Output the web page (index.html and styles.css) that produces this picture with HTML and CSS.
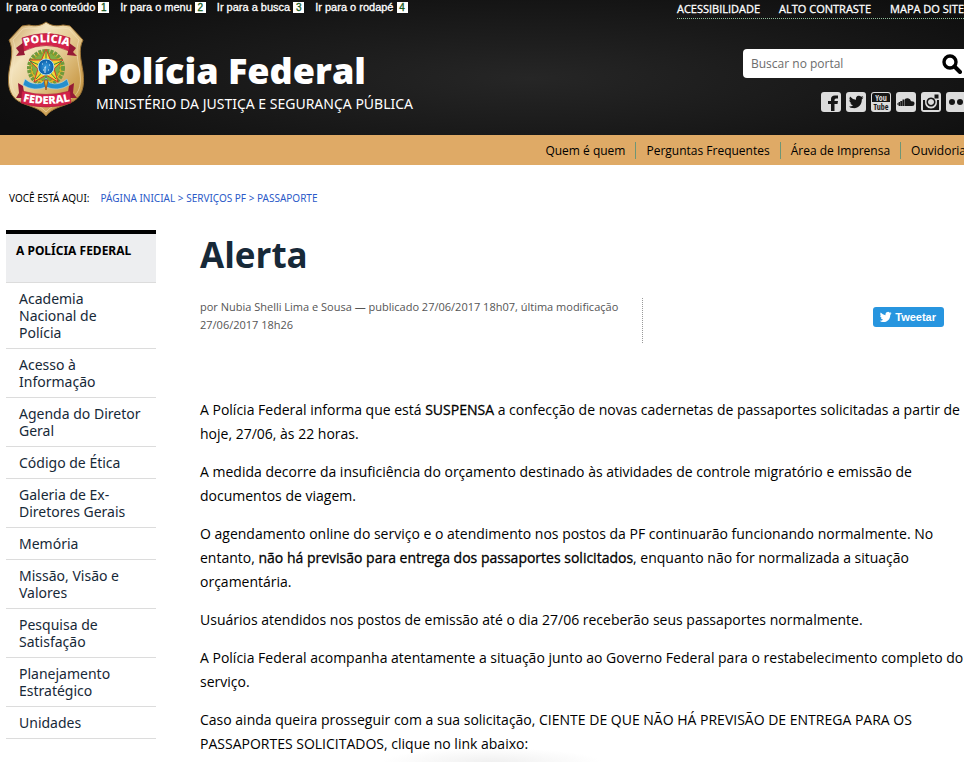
FILE: index.html
```html
<!DOCTYPE html>
<html lang="pt-BR">
<head>
<meta charset="utf-8">
<meta name="viewport" content="width=device-width, initial-scale=1">
<title>Alerta — Polícia Federal</title>
<link rel="stylesheet" href="styles.css">
</head>
<body>
<header class="header">
  <div class="topbar">
    <nav class="skip" aria-label="Atalhos">
      <a href="#conteudo">Ir para o conteúdo <span>1</span></a>
      <a href="#menu">Ir para o menu <span>2</span></a>
      <a href="#busca">Ir para a busca <span>3</span></a>
      <a href="#rodape">Ir para o rodapé <span>4</span></a>
    </nav>
    <nav class="tools" aria-label="Acessibilidade">
      <a href="#acessibilidade">ACESSIBILIDADE</a>
      <a href="#contraste">ALTO CONTRASTE</a>
      <a href="#mapa">MAPA DO SITE</a>
    </nav>
  </div>
  <div class="masthead">
    <a class="brand" href="#inicio">
      <svg class="badge" viewBox="0 0 76 96" aria-hidden="true">
        <defs>
          <linearGradient id="gold" x1="0" y1="0" x2="1" y2="1">
            <stop offset="0" stop-color="#c9a05c"/><stop offset=".28" stop-color="#f3e3bd"/>
            <stop offset=".5" stop-color="#e6cc94"/><stop offset=".75" stop-color="#cfa457"/><stop offset="1" stop-color="#b98838"/>
          </linearGradient>
          <radialGradient id="globe"><stop offset="0" stop-color="#3b9fe0"/><stop offset="1" stop-color="#075aa6"/></radialGradient>
          <path id="arcTop" d="M16.500 25.500Q38 17 61 25.500"/>
          <path id="arcBottom" d="M14 80Q38 86 63 80"/>
        </defs>
        <path d="M38 1C43 5 49 5.500 55 4L62 5L75 19C70 29 73 38 75 51C77 66 74 77 62 82C53 86 44 87 38 95C32 87 23 86 14 82C2 77-1 66 1 51C3 38 6 29 1 19L14 5L21 4C27 5.500 33 5 38 1Z" fill="url(#gold)" stroke="#9b7336"/>
        <path d="M38 4C43 8 49 8 55 7L61 8L71 19C67 29 70 39 72 52C74 66 70 75 60 79C51 82 43 85 38 91C33 85 25 82 16 79C6 75 2 66 4 52C6 39 9 29 5 19L15 8L21 7C27 8 33 8 38 4Z" fill="none" stroke="#f7e8c5" stroke-opacity=".5"/>
        <circle cx="38" cy="47" r="17" fill="#e4b629" stroke="#6f9a3c" stroke-width="4" stroke-dasharray="3 1"/>
        <circle cx="38" cy="46" r="14" fill="#7fae45" stroke="#7d8d28" stroke-dasharray="2 2"/>
        <path d="M38 28L42.500 39L55 39L46 48L50 61L38 54L26 61L30 48L21 39L33.500 39Z" fill="#f6d634" stroke="#d33c2b"/>
        <path d="M38 30L38 60M22 40L38 47L54 40M28 58L38 47L48 58" fill="none" stroke="#2f8646"/>
        <path d="M17 58Q25 65 34 62L38 57L42 62Q51 65 59 58L61 64Q50 71 38 66Q26 71 15 64Z" fill="#258fce" stroke="#b6dced" stroke-width=".6"/>
        <path d="M36 59L38 69L40 59Z" fill="#dfb526" stroke="#a45a22"/>
        <circle cx="38" cy="46" r="8" fill="url(#globe)" stroke="#a9d8ef"/>
        <path d="M34 43h1m3-2h1m2 3h1m-5 2h1m-3 3h1m4 0h1m-4-3v6" stroke="#d7edf9"/>
        <path d="M8 27L16 21V31L17 34L8 35L11 31ZM68 27L60 21V31L59 34L69 35L65 31Z" fill="#961a35"/>
        <path d="M14 17Q38 8 62 17L61 30Q38 19 16 30Z" fill="#d42349" stroke="#a81737" stroke-width=".6"/>
        <path d="M10 62L15 65L17 77L8 77L11 72ZM66 62L61 65L59 77L69 77L65 72Z" fill="#961a35"/>
        <path d="M14 70Q38 77 62 70L63 82Q38 90 13 82Z" fill="#d42349" stroke="#a81737" stroke-width=".6"/>
        <text class="badge-text"><textPath href="#arcTop" startOffset="50%">POLÍCIA</textPath></text>
        <text class="badge-text"><textPath href="#arcBottom" startOffset="50%">FEDERAL</textPath></text>
      </svg>
      <span class="brand-text">
        <strong>Polícia Federal</strong>
        <span>MINISTÉRIO DA JUSTIÇA E SEGURANÇA PÚBLICA</span>
      </span>
    </a>
    <div class="aside">
      <form class="search" id="busca">
        <input type="search" aria-label="Buscar no portal" placeholder="Buscar no portal">
        <button type="button" aria-label="Buscar">
          <svg viewBox="0 0 20 20" aria-hidden="true"><circle cx="8" cy="8" r="6" fill="none" stroke="#000" stroke-width="3.400"/><path d="M12.500 12.500L18 18" stroke="#000" stroke-width="4" stroke-linecap="round"/></svg>
        </button>
      </form>
      <div class="social">
        <a href="#facebook" aria-label="Facebook"><svg viewBox="0 0 20 20"><rect width="20" height="20" rx="3"/><path class="ink" d="M10 19V12H7V9H10V7Q10 3.500 14 3.500H17V6.500H15Q13.500 6.500 13.500 8V9H17L16.500 12H13.500V19Z"/></svg></a>
        <a href="#twitter" aria-label="Twitter"><svg viewBox="0 0 20 20"><rect width="20" height="20" rx="3"/><path class="ink" d="M17.500 5.500L15.800 7.500C16 13 11.500 17 6.500 16Q4.500 16 3 14.500Q5.500 14.700 7 13.300Q4.800 13 4.300 11.300H5.500Q3.300 10.300 3.300 8L4.500 8.500Q2.700 6.700 4 4.500Q6.500 7.500 10 7.700Q9.500 4 12.700 3.700Q14.200 3.600 15.200 4.700L17.200 4L16 5.700Z"/></svg></a>
        <a href="#youtube" aria-label="YouTube"><svg viewBox="0 0 20 20"><rect width="20" height="20" rx="3"/><path class="ink" d="M1 3Q1 1 3 1H17Q19 1 19 3V10H1Z"/><text class="yt light" x="10" y="9">You</text><text class="yt" x="10" y="18">Tube</text></svg></a>
        <a href="#soundcloud" aria-label="SoundCloud"><svg viewBox="0 0 20 20"><rect width="20" height="20" rx="3"/><path class="ink" d="M9 14V7Q10 6 12 6.200Q14.500 6.600 15 9.300Q18.500 9 18.500 11.700Q18.500 14 16 14ZM6.500 7.500H8.600V14H6.500ZM4.300 9H6.200V14H4.300ZM2.600 10H4V14H2.600ZM1.500 11H2.300V13H1.500Z"/></svg></a>
        <a href="#instagram" aria-label="Instagram"><svg viewBox="0 0 20 20"><rect width="20" height="20" rx="3"/><path class="ink" fill-rule="evenodd" d="M2 8H4Q3.500 16.500 10 16.500Q16.500 16.500 16 8H18V18H2ZM13.500 2.500H17.500V6.500H13.500ZM10 5.500a4.500 4.500 0 1 0 .01 0ZM10 7a3 3 0 1 1-.01 0Z"/></svg></a>
        <a href="#flickr" aria-label="Flickr"><svg viewBox="0 0 20 20"><rect width="20" height="20" rx="3"/><circle class="ink" cx="6" cy="10" r="3"/><circle class="ink" cx="14" cy="10" r="3"/></svg></a>
      </div>
    </div>
  </div>
</header>
<nav class="services" aria-label="Serviços">
  <a href="#quem">Quem é quem</a>
  <a href="#perguntas">Perguntas Frequentes</a>
  <a href="#imprensa">Área de Imprensa</a>
  <a href="#ouvidoria">Ouvidoria</a>
</nav>
<nav class="crumbs" aria-label="Você está aqui">
  <span>VOCÊ ESTÁ AQUI:</span>
  <div><a href="#inicio">PÁGINA INICIAL</a> &gt; <a href="#servicos">SERVIÇOS PF</a> &gt; <a href="#passaporte">PASSAPORTE</a></div>
</nav>
<div class="page">
  <nav class="side" id="menu" aria-labelledby="menu-title">
    <h2 id="menu-title">A POLÍCIA FEDERAL</h2>
    <ul>
      <li><a href="#academia">Academia Nacional de<br>Polícia</a></li>
      <li><a href="#acesso">Acesso à Informação</a></li>
      <li><a href="#agenda">Agenda do Diretor Geral</a></li>
      <li><a href="#etica">Código de Ética</a></li>
      <li><a href="#galeria">Galeria de Ex-Diretores Gerais</a></li>
      <li><a href="#memoria">Memória</a></li>
      <li><a href="#missao">Missão, Visão e Valores</a></li>
      <li><a href="#pesquisa">Pesquisa de Satisfação</a></li>
      <li><a href="#planejamento">Planejamento Estratégico</a></li>
      <li><a href="#unidades">Unidades</a></li>
    </ul>
  </nav>
  <main class="content" id="conteudo">
    <h1>Alerta</h1>
    <div class="meta">
      <p>por Nubia Shelli Lima e Sousa — publicado 27/06/2017 18h07, última modificação 27/06/2017 18h26</p>
      <div class="share">
        <button class="tweet" type="button">
          <svg viewBox="2 3 16 14" aria-hidden="true"><path d="M17.500 5.500L15.800 7.500C16 13 11.500 17 6.500 16Q4.500 16 3 14.500Q5.500 14.700 7 13.300Q4.800 13 4.300 11.300H5.500Q3.300 10.300 3.300 8L4.500 8.500Q2.700 6.700 4 4.500Q6.500 7.500 10 7.700Q9.500 4 12.700 3.700Q14.200 3.600 15.200 4.700L17.200 4L16 5.700Z" fill="#fff"/></svg>
          Tweetar
        </button>
      </div>
    </div>
    <div class="body">
      <p>A Polícia Federal informa que está <b>SUSPENSA</b> a confecção de novas cadernetas de passaportes solicitadas a partir de hoje, 27/06, às 22 horas.</p>
      <p>A medida decorre da insuficiência do orçamento destinado às atividades de controle migratório e emissão de documentos de viagem.</p>
      <p>O agendamento online do serviço e o atendimento nos postos da PF continuarão funcionando normalmente. No entanto, <b>não há previsão para entrega dos passaportes solicitados</b>, enquanto não for normalizada a situação orçamentária.</p>
      <p>Usuários atendidos nos postos de emissão até o dia 27/06 receberão seus passaportes normalmente.</p>
      <p>A Polícia Federal acompanha atentamente a situação junto ao Governo Federal para o restabelecimento completo do serviço.</p>
      <p>Caso ainda queira prosseguir com a sua solicitação, CIENTE DE QUE NÃO HÁ PREVISÃO DE ENTREGA PARA OS PASSAPORTES SOLICITADOS, clique no link abaixo:</p>
    </div>
  </main>
</div>
</body>
</html>
```
FILE: styles.css
```css
* { box-sizing: border-box; }
body {
  min-height: 100vh;
  margin: 0;
  overflow-x: hidden;
  background: radial-gradient(ellipse 110px 14px at 51% 100%, #f0f0f0, #fff);
  color: #000;
  font-family: "Noto Sans", "Open Sans", sans-serif;
  font-size: 14px;
}
a { color: inherit; text-decoration: none; }
h1, h2, p, ul { margin: 0; padding: 0; }
svg { display: block; }

.header {
  color: #fff;
  background: radial-gradient(ellipse 60% 80% at 55% 58%, #262626, #0e0e0e);
}
.topbar {
  display: flex;
  justify-content: space-between;
  align-items: flex-start;
  height: 20px;
  padding-left: 6px;
}
.skip {
  display: flex;
  gap: 11px;
  padding-top: 2px;
  font: 11px/11px "Liberation Sans", Arial, sans-serif;
  -webkit-text-stroke: 0.3px;
}
.skip a { display: flex; gap: 3px; }
.skip span {
  width: 11px;
  height: 11px;
  font-size: 10px;
  text-align: center;
  background: #fff;
  color: #14581b;
}
.tools {
  display: flex;
  gap: 19px;
  height: 19px;
  border-bottom: 1px dotted #8fbf9c;
  font-family: "Open Sans", sans-serif;
  font-size: 11px;
  line-height: 18px;
  -webkit-text-stroke: 0.3px;
}
.masthead {
  display: flex;
  justify-content: space-between;
  height: 115px;
  padding-left: 8px;
}
.brand { display: flex; gap: 12px; }
.badge { width: 76px; height: 96px; margin-top: 1px; }
.badge-text {
  font: 800 11px "Open Sans", sans-serif;
  fill: #fff;
  text-anchor: middle;
}
.brand-text { padding-top: 28px; }
.brand-text strong {
  display: block;
  font-family: "Open Sans", sans-serif;
  font-size: 36px;
  font-weight: 800;
  line-height: 46px;
  white-space: nowrap;
}
.brand-text span { display: block; font-size: 14px; line-height: 20px; white-space: nowrap; }
.aside {
  display: flex;
  flex-direction: column;
  align-items: flex-end;
  gap: 14px;
  margin-right: -4px;
  padding-top: 29px;
}
.search {
  display: flex;
  align-items: center;
  width: 225px;
  height: 29px;
  padding: 0 6px 0 8px;
  background: #fff;
  border-radius: 4px;
}
.search input {
  flex: 1;
  min-width: 0;
  padding: 0;
  border: 0;
  outline: 0;
  background: none;
  font: 12px/20px "Open Sans", sans-serif;
}
.search input::placeholder { color: #6c6c6c; }
.search button { padding: 0; border: 0; background: none; }
.search button svg { width: 20px; height: 20px; }
.social { display: flex; gap: 5px; padding-right: 2px; }
.social svg { width: 20px; height: 20px; fill: #dcdcdc; }
.social .ink { fill: #161616; }
.social .yt {
  font: bold 8px "Liberation Sans Narrow", "Open Sans Condensed", "Liberation Sans", sans-serif;
  fill: #161616;
  text-anchor: middle;
}
.social .yt.light { fill: #dcdcdc; }

.services {
  display: flex;
  justify-content: flex-end;
  align-items: center;
  height: 30px;
  margin-right: -12px;
  background: #dfaa66;
  font-family: "Open Sans", sans-serif;
  font-size: 12px;
  line-height: 16px;
}
.services a { padding: 1px 10px 0; white-space: nowrap; }
.services a + a { border-left: 1px solid #6d9676; }

.crumbs {
  display: flex;
  gap: 11px;
  padding: 25px 9px 0;
  font-size: 10px;
  line-height: 16px;
}
.crumbs div { color: #2c5ac8; }

.page { display: flex; gap: 44px; padding: 24px 0 0 6px; }
.side { flex: none; width: 150px; }
.side h2 {
  height: 52px;
  padding: 8px 10px;
  border-top: 4px solid #000;
  background: #edeef0;
  font-size: 12px;
  line-height: 17px;
}
.side ul { list-style: none; border-top: 1px solid #dcdcdc; }
.side li {
  padding: 7px 13px;
  border-bottom: 1px solid #dcdcdc;
  color: #172938;
  line-height: 17px;
}
.content { flex: 1; min-width: 0; }
h1 { color: #172938; font-family: "Open Sans", sans-serif; font-size: 35px; font-weight: 700; line-height: 50px; }
.meta { display: flex; margin-top: 18px; }
.meta p {
  flex: none;
  width: 58%;
  min-height: 45px;
  padding-right: 20px;
  border-right: 1px dotted #999;
  color: #555;
  font-family: "Open Sans", sans-serif;
  font-size: 11px;
  line-height: 18px;
}
.share { flex: 1; display: flex; justify-content: flex-end; align-items: flex-start; padding: 9px 20px 0 0; }
.tweet {
  display: flex;
  align-items: center;
  gap: 3px;
  height: 20px;
  padding: 0 8px 0 6px;
  border: 0;
  border-radius: 3px;
  background: #2795df;
  color: #fff;
  font: bold 11px/20px "Liberation Sans", Arial, sans-serif;
}
.tweet svg { width: 13px; height: 12px; }
.body {
  display: flex;
  flex-direction: column;
  gap: 14px;
  padding-top: 55px;
  font-family: "Open Sans", sans-serif;
  font-size: 14px;
  line-height: 24px;
}
.body b { font-weight: normal; -webkit-text-stroke: 0.3px; }
```
